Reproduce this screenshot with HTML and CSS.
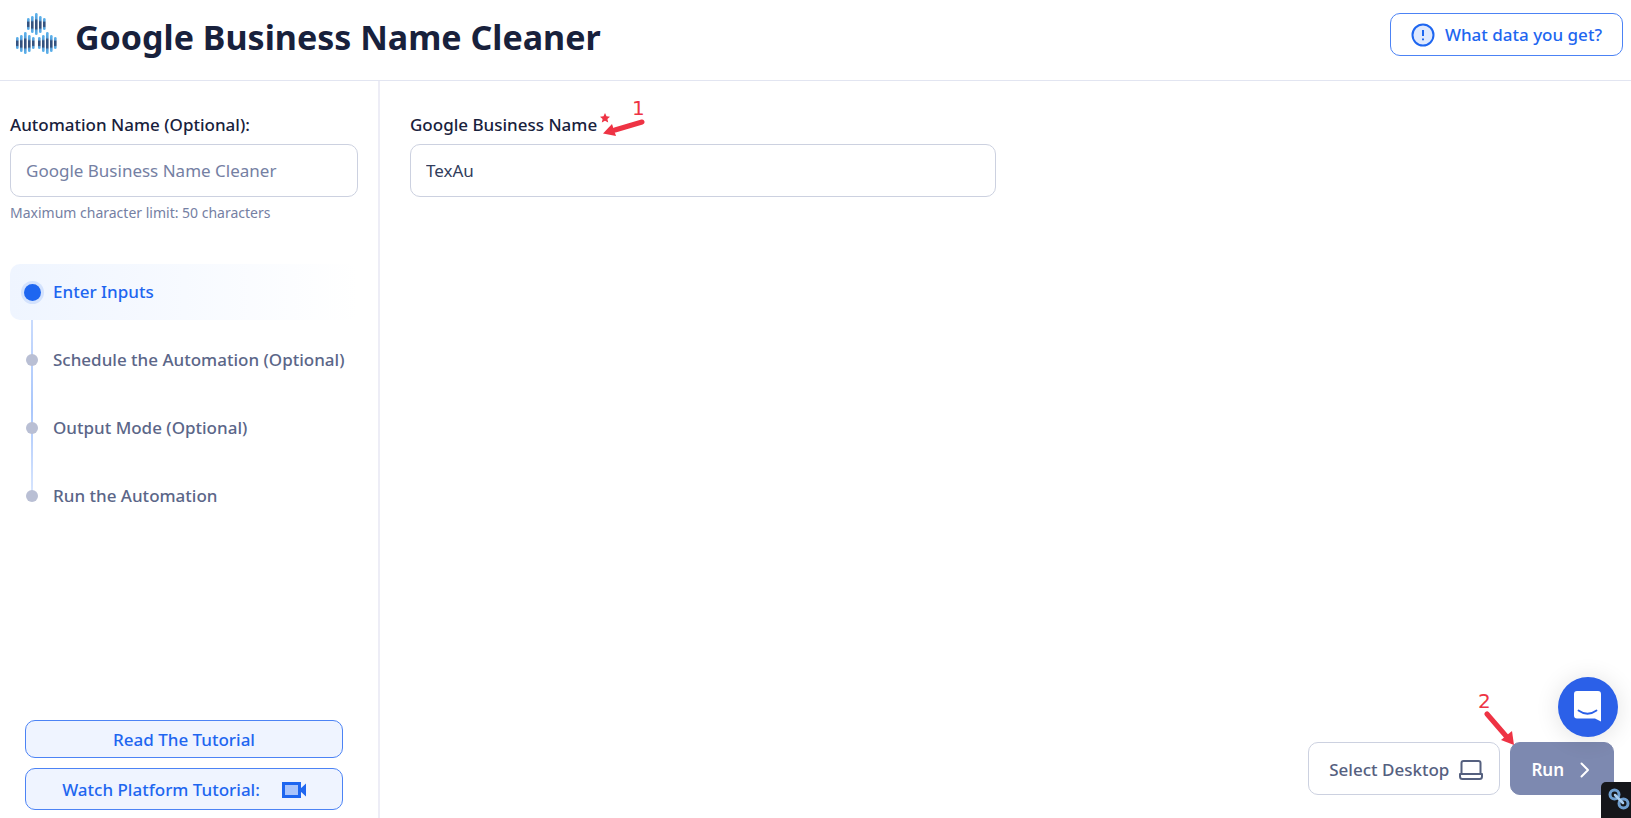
FILE: index.html
```html
<!DOCTYPE html>
<html lang="en">

<head>
    <meta charset="UTF-8">
    <meta name="viewport" content="width=device-width, initial-scale=1.0">
    <title>Google Business Name Cleaner</title>
    <link rel="stylesheet" href="styles.css">
</head>

<body>
    <header class="header">
        <svg class="logo" width="42" height="42" viewBox="0 0 42 42" aria-hidden="true">
            <defs>
                <linearGradient id="bar" x1="0" y1="0" x2="0" y2="1">
                    <stop offset="0" stop-color="#5cb4ee" />
                    <stop offset="0.25" stop-color="#58a2dc" />
                    <stop offset="0.35" stop-color="#34527f" />
                    <stop offset="0.7" stop-color="#34527f" />
                    <stop offset="0.8" stop-color="#58a2dc" />
                    <stop offset="1" stop-color="#5cb4ee" />
                </linearGradient>
                <g id="cluster" fill="url(#bar)">
                    <rect x="0" y="5" width="2.6" height="12" rx="1.2" />
                    <rect x="4" y="3" width="2.6" height="17" rx="1.2" />
                    <rect x="8" y="0" width="2.6" height="22" rx="1.2" />
                    <rect x="12" y="3" width="2.6" height="17" rx="1.2" />
                    <rect x="16" y="5" width="2.6" height="12" rx="1.2" />
                </g>
            </defs>
            <use href="#cluster" x="12" y="0" />
            <use href="#cluster" x="1" y="19" />
            <use href="#cluster" x="23" y="19" />
        </svg>
        <h1>Google Business Name Cleaner</h1>
        <button type="button" class="btn btn-info">
            <svg width="24" height="24" viewBox="0 0 24 24" aria-hidden="true">
                <circle cx="12" cy="12" r="10.5" fill="#dfe9fe" stroke="#1e66f0" stroke-width="2" />
                <path d="M12 7v6M12 15.5v1.8" fill="none" stroke="#1e66f0" stroke-width="2" />
            </svg>
            What data you get?
        </button>
    </header>

    <div class="layout">
        <aside class="sidebar">
            <div class="field">
                <label for="automation-name">Automation Name (Optional):</label>
                <input type="text" id="automation-name" placeholder="Google Business Name Cleaner" maxlength="50">
                <p class="hint">Maximum character limit: 50 characters</p>
            </div>

            <ol class="steps">
                <li class="step active">Enter Inputs</li>
                <li class="step">Schedule the Automation (Optional)</li>
                <li class="step">Output Mode (Optional)</li>
                <li class="step">Run the Automation</li>
            </ol>

            <div class="tutorials">
                <button type="button" class="btn btn-soft">Read The Tutorial</button>
                <button type="button" class="btn btn-soft btn-video">
                    Watch Platform Tutorial:
                    <svg width="24" height="16" viewBox="0 0 24 16" aria-hidden="true">
                        <rect x="1.500" y="1.500" width="16" height="13" fill="#a9c4fb" stroke="#1e66f0" stroke-width="3" />
                        <path d="M17 8l7-6.500v13z" fill="#1e66f0" />
                    </svg>
                </button>
            </div>
        </aside>

        <main class="content">
            <div class="field field-business">
                <label for="business-name">
                    Google Business Name
                    <svg class="required" width="10" height="10" viewBox="0 0 10 10" aria-hidden="true">
                        <path d="M5 0l1.500 3.300 3.500.4-2.600 2.300.8 3.500L5 7.700 1.800 9.500l.8-3.500L0 3.700l3.500-.4z" fill="#ee3344" />
                    </svg>
                    <span class="callout callout-input">1
                        <svg width="42" height="20" viewBox="0 0 42 20" aria-hidden="true">
                            <path d="M39 4L12 12" fill="none" stroke="#ee3344" stroke-width="5" stroke-linecap="round" />
                            <path d="M0 15.500L9 6l4 12z" fill="#ee3344" />
                        </svg>
                    </span>
                </label>
                <input type="text" id="business-name" value="TexAu">
            </div>

            <div class="actions">
                <button type="button" class="btn btn-desktop">
                    Select Desktop
                    <svg width="24" height="20" viewBox="0 0 24 20" aria-hidden="true">
                        <path d="M2.500 14V3q0-2 2-2h15q2 0 2 2v11M1 14h22v2.500q0 2.500-2.500 2.500h-17Q1 19 1 16.500z" fill="none" stroke="#55607f" stroke-width="2" stroke-linejoin="round" />
                    </svg>
                </button>
                <button type="button" class="btn btn-run">
                    Run
                    <svg width="10" height="16" viewBox="0 0 10 16" aria-hidden="true">
                        <path d="M1.500 1.500L8 8l-6.500 6.500" fill="none" stroke="#fff" stroke-width="2" stroke-linecap="round" stroke-linejoin="round" />
                    </svg>
                </button>
                <span class="callout callout-run">2
                    <svg width="38" height="36" viewBox="0 0 38 36" aria-hidden="true">
                        <path d="M9 3l19 22" fill="none" stroke="#ee3344" stroke-width="5" stroke-linecap="round" />
                        <path d="M36 34l-13-5 11-9z" fill="#ee3344" />
                    </svg>
                </span>
            </div>
        </main>
    </div>

    <button type="button" class="chat" aria-label="Open chat">
        <svg width="28" height="32" viewBox="0 0 28 32" aria-hidden="true">
            <path d="M3 0h21q3 0 3 3v27.500l-6-3H3q-3 0-3-3V3q0-3 3-3z" fill="#fff" />
            <path d="M4.500 19.500q9 6.500 18 0" fill="none" stroke="#2b60e8" stroke-width="1.800" stroke-linecap="round" />
        </svg>
    </button>

    <button type="button" class="link-badge" aria-label="Copy link">
        <svg width="22" height="22" viewBox="0 0 22 22" aria-hidden="true">
            <g fill="none" stroke="#6f9fd0" stroke-width="3">
                <circle cx="6.500" cy="6.500" r="4.500" />
                <circle cx="15.500" cy="15.500" r="4.500" />
            </g>
            <path d="M7 7l8 8" stroke="#a9cdf0" stroke-width="2.500" stroke-linecap="round" />
        </svg>
    </button>
</body>

</html>
```

FILE: styles.css
```css
* {
    box-sizing: border-box;
}

body {
    display: flex;
    flex-direction: column;
    min-height: 100vh;
    margin: 0;
    font-family: "Segoe UI", "Noto Sans", sans-serif;
    font-size: 17px;
    line-height: 24px;
    color: #18213c;
    background-color: #fff;
}

button,
input {
    font: inherit;
}

.header {
    display: flex;
    align-items: center;
    height: 81px;
    padding: 0 8px 12px 15px;
    border-bottom: 1px solid #e2e5f1;
}

.header h1 {
    margin: 0 auto 0 18px;
    padding-top: 6px;
    font-size: 34px;
    line-height: 48px;
    font-weight: 700;
}

.btn {
    display: flex;
    align-items: center;
    justify-content: center;
    padding: 2px 20px 0;
    border: 1px solid #4c83f5;
    border-radius: 10px;
    color: #1e66f0;
    background-color: #fff;
    font-weight: 500;
    cursor: pointer;
}

.btn-info {
    gap: 10px;
    height: 43px;
}

.layout {
    display: flex;
    flex: 1;
}

.sidebar {
    display: flex;
    flex-direction: column;
    width: 380px;
    padding: 32px 20px 8px 10px;
    border-right: 2px solid #ededf6;
}

.field label {
    display: block;
    margin-bottom: 7px;
    font-weight: 500;
}

.field input {
    display: block;
    width: 100%;
    height: 53px;
    padding: 0 15px;
    border: 1px solid #ccd1e0;
    border-radius: 10px;
    color: #323d5c;
    background-color: #fff;
    outline: none;
}

.field input::placeholder {
    color: #7580a3;
    opacity: 1;
}

.hint {
    margin: 4px 0 0;
    font-size: 14px;
    color: #7580a3;
}

/* steps */
.steps {
    position: relative;
    display: flex;
    flex-direction: column;
    gap: 12px;
    margin: 39px 0 0;
    padding: 0;
    list-style: none;
}

.steps::before {
    content: "";
    position: absolute;
    top: 56px;
    bottom: 28px;
    left: 21px;
    width: 2px;
    background: linear-gradient(#c9dbfd, #a9c6fb 50%, #d9e6fe);
}

.step {
    position: relative;
    display: flex;
    align-items: center;
    gap: 15px;
    height: 56px;
    padding-left: 16px;
    border-radius: 10px;
    font-weight: 500;
    color: #5b6688;
}

.step::before {
    content: "";
    width: 12px;
    height: 12px;
    border-radius: 50%;
    background-color: #b9bfd4;
}

.step.active {
    gap: 12px;
    padding-left: 14px;
    color: #1e66f0;
    background: linear-gradient(90deg, #eff5ff, #fff);
}

.step.active::before {
    width: 17px;
    height: 17px;
    background-color: #1e66f0;
    box-shadow: 0 0 0 3px #d3e2fd;
}

.tutorials {
    display: flex;
    flex-direction: column;
    gap: 10px;
    margin-top: auto;
    padding: 0 15px;
}

.btn-soft {
    height: 38px;
    background-color: #eff4ff;
}

.btn-video {
    gap: 22px;
    height: 42px;
}

/* form */
.content {
    display: flex;
    flex: 1;
    flex-direction: column;
    justify-content: space-between;
    padding: 32px 17px 23px 30px;
}

.field-business {
    width: calc(50% - 16px);
}

.field-business label {
    position: relative;
    width: max-content;
}

.required {
    margin-left: -2px;
    vertical-align: 8px;
}

.actions {
    position: relative;
    display: flex;
    justify-content: flex-end;
    gap: 10px;
}

.btn-desktop {
    gap: 10px;
    height: 53px;
    padding: 2px 16px 0 20px;
    border-color: #ccd1e0;
    color: #55607f;
}

.btn-run {
    gap: 16px;
    height: 53px;
    padding: 2px 23px 0 20px;
    border-color: #7d89b0;
    color: #fff;
    background-color: #7d89b0;
    font-weight: 600;
}

/* numbered arrows */
.callout {
    position: absolute;
    font-family: "DejaVu Sans", sans-serif;
    font-size: 20px;
    font-weight: 400;
    line-height: 20px;
    color: #ee3344;
}

.callout svg {
    display: block;
}

.callout-input {
    top: -15px;
    right: -35px;
    text-align: right;
}

.callout-run {
    right: 98px;
    bottom: 48px;
}

/* floating buttons */
.chat {
    position: fixed;
    right: 13px;
    bottom: 81px;
    display: flex;
    align-items: center;
    justify-content: center;
    width: 60px;
    height: 60px;
    border: none;
    border-radius: 50%;
    background-color: #2b60e8;
    box-shadow: 0 2px 24px rgba(0, 0, 0, 0.12);
    cursor: pointer;
}

.link-badge {
    position: fixed;
    right: 0;
    bottom: 0;
    width: 30px;
    height: 36px;
    padding: 4px 0 0 6px;
    border: none;
    border-radius: 5px 0 0 0;
    background-color: #15161a;
    cursor: pointer;
}
```
